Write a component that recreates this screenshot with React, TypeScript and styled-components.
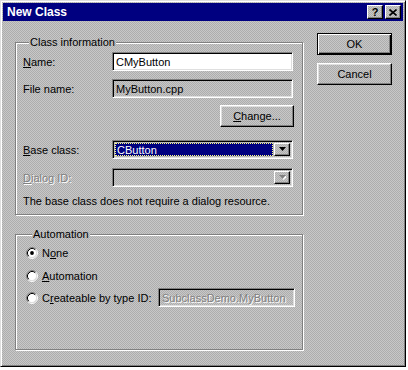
import React from 'react';
import styled, { createGlobalStyle, css } from 'styled-components';

const GlobalStyle = createGlobalStyle`
  body {
    margin: 0;
    background: #ffffff;
    font-family: 'Liberation Sans', Arial, sans-serif;
    font-size: 11px;
  }
`;

// dithered 3D face, aligned to the viewport so every panel matches
const face = css`
  background-color: #c0c0c0;
  background-image: repeating-conic-gradient(#c8c8c8 0 25%, #adadad 0 50%);
  background-size: 2px 2px;
  background-attachment: fixed;
`;

const sunken = css`
  border: 1px solid;
  border-color: #808080 #ffffff #ffffff #808080;
  box-shadow: inset 1px 1px 0 #000000, inset -1px -1px 0 #dfdfdf;
`;

const raised = css`
  border: 1px solid;
  border-color: #ffffff #000000 #000000 #ffffff;
  box-shadow: inset -1px -1px 0 #808080;
`;

const disabledText = css`
  color: #808080;
  text-shadow: 1px 1px 0 #ffffff;
`;

const Window = styled.div`
  ${face};
  width: 406px;
  height: 367px;
  box-sizing: border-box;
  border: 1px solid;
  border-color: #dfdfdf #000000 #000000 #dfdfdf;
  box-shadow: inset 1px 1px 0 #ffffff, inset -1px -1px 0 #808080;
  padding: 2px;
  display: flex;
  flex-direction: column;
`;

const TitleBar = styled.div`
  height: 18px;
  background: #000080;
  display: flex;
  align-items: center;
  padding: 0 2px 0 4px;
  color: #ffffff;
  font-weight: 700;
  font-size: 12px;
`;

const Title = styled.span`
  flex: 1;
`;

const CaptionButton = styled.div<{ $gap?: number }>`
  ${face};
  ${raised};
  width: 16px;
  height: 14px;
  box-sizing: border-box;
  margin-left: ${p => p.$gap ?? 0}px;
  display: flex;
  align-items: center;
  justify-content: center;
  color: #000000;
  font-size: 11px;
  font-weight: 700;
  line-height: 1;
`;

const Body = styled.div`
  display: flex;
  align-items: flex-start;
  padding-left: 12px;
`;

const LeftColumn = styled.div`
  width: 288px;
  display: flex;
  flex-direction: column;
`;

const Group = styled.fieldset<{ $top: number; $pad: string }>`
  margin: ${p => p.$top}px 0 0 0;
  padding: ${p => p.$pad};
  min-width: 0;
  border: 1px solid #808080;
  box-shadow: inset 1px 1px 0 #ffffff, 1px 1px 0 #ffffff;
  display: flex;
  flex-direction: column;
`;

const Legend = styled.legend`
  ${face};
  margin-left: 6px;
  padding: 0 1px;
  line-height: 13px;
  color: #000000;
`;

const Row = styled.div<{ $top?: number; $height?: number }>`
  display: flex;
  align-items: center;
  margin-top: ${p => p.$top ?? 0}px;
  height: ${p => p.$height ?? 19}px;
`;

const Label = styled.span<{ $disabled?: boolean }>`
  width: 89px;
  flex: none;
  color: #000000;
  ${p => p.$disabled && disabledText};
`;

const TextBox = styled.div<{ $white?: boolean; $width?: number }>`
  ${p => (p.$white ? 'background: #ffffff;' : face)};
  ${sunken};
  box-sizing: border-box;
  width: ${p => p.$width ?? 181}px;
  height: 19px;
  padding-left: 3px;
  display: flex;
  align-items: center;
  color: #000000;
  white-space: nowrap;
  overflow: hidden;
`;

const Dim = styled.span`
  ${disabledText};
`;

const Combo = styled.div`
  ${sunken};
  box-sizing: border-box;
  width: 181px;
  height: 19px;
  padding: 2px;
  display: flex;
`;

const ComboField = styled.div<{ $selected?: boolean }>`
  flex: 1;
  display: flex;
  align-items: center;
  padding-left: 2px;
  margin-right: 1px;
  ${p =>
    p.$selected &&
    css`
      background: #000080;
      color: #ffffff;
      outline: 1px dotted #ffff80;
      outline-offset: -1px;
    `}
`;

const ComboButton = styled.div`
  ${face};
  ${raised};
  width: 16px;
  box-sizing: border-box;
  display: flex;
  align-items: center;
  justify-content: center;
`;

const PushButton = styled.div<{ $width?: number; $default?: boolean }>`
  ${face};
  box-sizing: border-box;
  width: ${p => p.$width ?? 75}px;
  height: 22px;
  display: flex;
  align-items: center;
  justify-content: center;
  color: #000000;
  border: 1px solid;
  border-color: #ffffff #000000 #000000 #ffffff;
  box-shadow: inset -1px -1px 0 #808080, inset 1px 1px 0 #dfdfdf;
  ${p =>
    p.$default &&
    css`
      border: 1px solid #000000;
      box-shadow: inset 1px 1px 0 #ffffff, inset -1px -1px 0 #000000, inset -2px -2px 0 #808080;
    `}
`;

const ButtonRow = styled.div`
  display: flex;
  justify-content: flex-end;
  margin-top: 7px;
`;

const Note = styled.div`
  margin-top: 8px;
  line-height: 13px;
  color: #000000;
`;

const RadioRow = styled.div<{ $top?: number; $height?: number }>`
  display: flex;
  align-items: center;
  gap: 4px;
  margin-top: ${p => p.$top ?? 0}px;
  height: ${p => p.$height ?? 16}px;
  color: #000000;
`;

const TypeIdBox = styled.div`
  margin-left: auto;
`;

const RightColumn = styled.div`
  display: flex;
  flex-direction: column;
  gap: 8px;
  margin: 12px 0 0 14px;
`;

const Radio = ({ checked }: { checked?: boolean }) => (
  <svg width="12" height="12" viewBox="0 0 12 12">
    <circle cx="6" cy="6" r="4.5" fill="#ffffff" />
    <path d="M2.11 9.89 A5.5 5.5 0 0 1 9.89 2.11" fill="none" stroke="#808080" />
    <path d="M9.89 2.11 A5.5 5.5 0 0 1 2.11 9.89" fill="none" stroke="#ffffff" />
    <path d="M2.82 9.18 A4.5 4.5 0 0 1 9.18 2.82" fill="none" stroke="#000000" />
    <path d="M9.18 2.82 A4.5 4.5 0 0 1 2.82 9.18" fill="none" stroke="#dfdfdf" />
    {checked && <circle cx="6" cy="6" r="1.9" fill="#000000" />}
  </svg>
);

const Arrow = ({ disabled }: { disabled?: boolean }) => (
  <svg width="7" height="5" viewBox="0 0 7 5">
    {disabled && <path d="M1 1h7l-3.5 4z" fill="#ffffff" />}
    <path d="M0 0h7l-3.5 4z" fill={disabled ? '#808080' : '#000000'} />
  </svg>
);

const CloseGlyph = () => (
  <svg width="8" height="7" viewBox="0 0 8 7">
    <path d="M0.5 0.5 L7.5 6.5 M7.5 0.5 L0.5 6.5" stroke="#000000" strokeWidth="1.6" />
  </svg>
);

export default function App() {
  return (
    <>
      <GlobalStyle />
      <Window>
        <TitleBar>
          <Title>New Class</Title>
          <CaptionButton>?</CaptionButton>
          <CaptionButton $gap={2}>
            <CloseGlyph />
          </CaptionButton>
        </TitleBar>
        <Body>
          <LeftColumn>
            <Group $top={15} $pad="3px 8px 6px 7px">
              <Legend>Class information</Legend>
              <Row>
                <Label>
                  <u>N</u>ame:
                </Label>
                <TextBox $white>CMyButton</TextBox>
              </Row>
              <Row $top={8}>
                <Label>File name:</Label>
                <TextBox>MyButton.cpp</TextBox>
              </Row>
              <ButtonRow>
                <PushButton $width={74}>
                  <span>
                    <u>C</u>hange...
                  </span>
                </PushButton>
              </ButtonRow>
              <Row $top={13}>
                <Label>
                  <u>B</u>ase class:
                </Label>
                <Combo>
                  <ComboField $selected>CButton</ComboField>
                  <ComboButton>
                    <Arrow />
                  </ComboButton>
                </Combo>
              </Row>
              <Row $top={9}>
                <Label $disabled>
                  <u>D</u>ialog ID:
                </Label>
                <Combo>
                  <ComboField />
                  <ComboButton>
                    <Arrow disabled />
                  </ComboButton>
                </Combo>
              </Row>
              <Note>The base class does not require a dialog resource.</Note>
            </Group>
            <Group $top={13} $pad="4px 7px 42px 10px">
              <Legend>Automation</Legend>
              <RadioRow>
                <Radio checked />
                <span>
                  N<u>o</u>ne
                </span>
              </RadioRow>
              <RadioRow $top={7}>
                <Radio />
                <span>
                  <u>A</u>utomation
                </span>
              </RadioRow>
              <RadioRow $top={4} $height={19}>
                <Radio />
                <span>
                  C<u>r</u>eateable by type ID:
                </span>
                <TypeIdBox>
                  <TextBox $width={137}>
                    <Dim>SubclassDemo.MyButton</Dim>
                  </TextBox>
                </TypeIdBox>
              </RadioRow>
            </Group>
          </LeftColumn>
          <RightColumn>
            <PushButton $default>OK</PushButton>
            <PushButton>Cancel</PushButton>
          </RightColumn>
        </Body>
      </Window>
    </>
  );
}
